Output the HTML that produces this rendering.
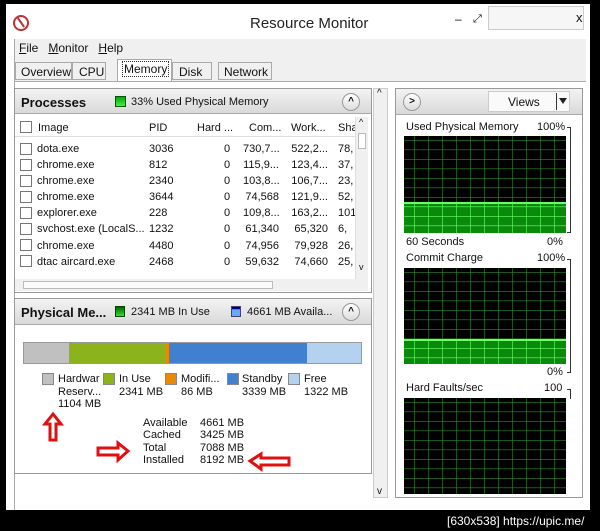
<!DOCTYPE html>
<html><head><style>
*{margin:0;padding:0;box-sizing:border-box}
html,body{width:600px;height:531px;overflow:hidden}
body{background:#000;position:relative;font-family:"Liberation Sans",sans-serif;font-size:11px;color:#111}
.a{position:absolute;white-space:nowrap}
.win{position:absolute;left:6px;top:4px;width:585px;height:506px;background:#fff}
.hdr{background:linear-gradient(#f3f3f3,#d9d9d9);border-bottom:1px solid #aaa}
.cb{position:absolute;width:12px;height:12px;border:1px solid #777;background:#fff}
.circ{position:absolute;width:18px;height:18px;border-radius:50%;border:1px solid #999;background:linear-gradient(#fff,#ddd);font-size:10px;text-align:center;line-height:16px;font-weight:bold}
.sw{position:absolute;width:12px;height:12px;border:1px solid #888}
</style></head><body>
<div class="win"></div>
<!-- title -->
<div class="a" style="left:13px;top:15px;width:16px;height:16px;border-radius:50%;border:2px solid #b33;background:#fff"></div>
<div class="a" style="left:20px;top:17px;width:2px;height:11px;background:#b33;transform:rotate(-35deg)"></div>
<div class="a" style="left:250px;top:15px;font-size:15px;color:#222">Resource Monitor</div>
<div class="a" style="left:455px;top:12px;font-size:12px">–</div>
<div class="a" style="left:473px;top:13px;font-size:11px">⤢</div>
<div class="a" style="left:488px;top:6px;width:96px;height:24px;border:1px solid #ccc;background:#f6f6f6"></div>
<div class="a" style="left:576px;top:10px;font-size:13px">x</div>
<!-- menu -->
<div class="a" style="left:14px;top:39px;width:572px;height:42px;background:#f0f0f0;border-left:1px solid #aaa"></div>
<div class="a" style="left:19px;top:41px;font-size:12px"><u>F</u>ile &nbsp;&nbsp;<u>M</u>onitor &nbsp;&nbsp;<u>H</u>elp</div>
<div class="a" style="left:15px;top:62px;width:57px;height:18px;border:1px solid #aaa;background:#f0f0f0;font-size:12px;padding:2px 5px">Overview</div>
<div class="a" style="left:72px;top:62px;width:34px;height:18px;border:1px solid #aaa;font-size:12px;padding:2px 6px">CPU</div>
<div class="a" style="left:117px;top:59px;width:55px;height:22px;border:1px solid #aaa;border-bottom:none;background:#fff;font-size:12px;padding:2px 4px"><span style="border:1px dotted #333;padding:0 1px">Memory</span></div>
<div class="a" style="left:172px;top:62px;width:40px;height:18px;border:1px solid #aaa;font-size:12px;padding:2px 6px">Disk</div>
<div class="a" style="left:218px;top:62px;width:54px;height:18px;border:1px solid #aaa;font-size:12px;padding:2px 5px">Network</div>
<div class="a" style="left:14px;top:81px;width:572px;height:429px;background:#fff;border-top:1px solid #aaa;border-left:1px solid #aaa"></div>
<!-- left processes panel -->
<div class="a" style="left:14px;top:88px;width:358px;height:205px;border:1px solid #999;background:#fff"></div>
<div class="a hdr" style="left:15px;top:89px;width:356px;height:25px"></div>
<div class="a" style="left:21px;top:95px;font-size:13px;font-weight:bold">Processes</div>
<div class="a" style="left:115px;top:96px;width:11px;height:11px;background:linear-gradient(#0a0,#4e4);border:1px solid #050"></div>
<div class="a" style="left:131px;top:96px">33% Used Physical Memory</div>
<div class="circ" style="left:342px;top:93px">^</div>
<div class="a" style="left:15px;top:117px;width:340px;height:20px;border-bottom:1px solid #ddd"></div>
<div class="cb" style="left:20px;top:121px"></div>
<div class="a" style="left:38px;top:122px">Image</div>
<div class="a" style="left:149px;top:122px">PID</div>
<div class="a" style="left:197px;top:122px">Hard ...</div>
<div class="a" style="left:249px;top:122px">Com...</div>
<div class="a" style="left:291px;top:122px">Work...</div>
<div class="a" style="left:338px;top:122px">Sha</div>
<div class="a" style="left:355px;top:117px;width:13px;height:162px;background:#f0f0f0;border-left:1px solid #ddd"></div>
<div class="a" style="left:358px;top:133px;width:8px;height:16px;border:1px solid #bbb;background:#fff"></div>
<div class="a" style="left:359px;top:117px;font-size:9px">^</div>
<div class="a" style="left:359px;top:262px;font-size:9px">v</div>
<div class="a" style="left:15px;top:279px;width:353px;height:12px;background:#f0f0f0"></div>
<div class="a" style="left:23px;top:281px;width:250px;height:8px;border:1px solid #bbb;background:#fbfbfb"></div>
<div class="a" style="left:20px;top:141px;width:13px">
<div class="cb" style="position:relative;margin:2px 0"></div><div class="cb" style="position:relative;margin:4px 0"></div><div class="cb" style="position:relative;margin:4px 0"></div><div class="cb" style="position:relative;margin:4px 0"></div><div class="cb" style="position:relative;margin:4px 0"></div><div class="cb" style="position:relative;margin:4px 0"></div><div class="cb" style="position:relative;margin:4px 0"></div><div class="cb" style="position:relative;margin:4px 0"></div></div>
<div class="a" style="left:37px;top:141px;line-height:16.1px">dota.exe<br>chrome.exe<br>chrome.exe<br>chrome.exe<br>explorer.exe<br>svchost.exe (LocalS...<br>chrome.exe<br>dtac aircard.exe</div>
<div class="a" style="left:149px;top:141px;line-height:16.1px">3036<br>812<br>2340<br>3644<br>228<br>1232<br>4480<br>2468</div>
<div class="a" style="left:224px;top:141px;line-height:16.1px">0<br>0<br>0<br>0<br>0<br>0<br>0<br>0</div>
<div class="a" style="left:243px;top:141px;line-height:16.1px;width:36px;text-align:right">730,7...<br>115,9...<br>103,8...<br>74,568<br>109,8...<br>61,340<br>74,956<br>59,632</div>
<div class="a" style="left:288px;top:141px;line-height:16.1px;width:40px;text-align:right">522,2...<br>123,4...<br>106,7...<br>121,9...<br>163,2...<br>65,320<br>79,928<br>74,660</div>
<div class="a" style="left:338px;top:141px;line-height:16.1px;width:17px;overflow:hidden">78,<br>37,<br>23,<br>52,<br>101<br>6,<br>26,<br>25,</div>
<!-- outer scrollbar -->
<div class="a" style="left:373px;top:88px;width:15px;height:410px;background:#f0f0f0;border:1px solid #ccc"></div>
<div class="a" style="left:377px;top:88px;font-size:10px">^</div>
<div class="a" style="left:377px;top:486px;font-size:10px">v</div>
<!-- physical memory panel -->
<div class="a" style="left:14px;top:298px;width:358px;height:176px;border:1px solid #999;background:#fff"></div>
<div class="a hdr" style="left:15px;top:299px;width:356px;height:26px"></div>
<div class="a" style="left:21px;top:305px;font-size:13px;font-weight:bold">Physical Me...</div>
<div class="a" style="left:115px;top:306px;width:10px;height:11px;background:linear-gradient(#060,#3d3);border:1px solid #040"></div>
<div class="a" style="left:131px;top:306px">2341 MB In Use</div>
<div class="a" style="left:231px;top:306px;width:10px;height:11px;background:linear-gradient(#008 20%,#6af 30%);border:1px solid #446"></div>
<div class="a" style="left:247px;top:306px">4661 MB Availa...</div>
<div class="circ" style="left:342px;top:303px">^</div>
<div class="a" style="left:23px;top:342px;width:339px;height:22px;border:1px solid #999;display:flex">
<div style="width:45px;background:#c0c0c0"></div><div style="width:97px;background:#8cb21c"></div><div style="width:3px;background:#e98a00"></div><div style="width:138px;background:#3f80d0"></div><div style="flex:1;background:#b4d2f0"></div></div>
<div class="sw" style="left:42px;top:373px;background:#c0c0c0"></div>
<div class="a" style="left:58px;top:373px;line-height:12.5px">Hardwar<br>Reserv...<br>1104 MB</div>
<div class="sw" style="left:103px;top:373px;background:#8cb21c"></div>
<div class="a" style="left:119px;top:373px;line-height:12.5px">In Use<br>2341 MB</div>
<div class="sw" style="left:165px;top:373px;background:#e98a00"></div>
<div class="a" style="left:181px;top:373px;line-height:12.5px">Modifi...<br>86 MB</div>
<div class="sw" style="left:227px;top:373px;background:#3f80d0"></div>
<div class="a" style="left:242px;top:373px;line-height:12.5px">Standby<br>3339 MB</div>
<div class="sw" style="left:288px;top:373px;background:#b4d2f0"></div>
<div class="a" style="left:304px;top:373px;line-height:12.5px">Free<br>1322 MB</div>
<div class="a" style="left:143px;top:417px;line-height:12.4px">Available<br>Cached<br>Total<br>Installed</div>
<div class="a" style="left:200px;top:417px;line-height:12.4px">4661 MB<br>3425 MB<br>7088 MB<br>8192 MB</div>
<!-- red arrows -->
<svg class="a" style="left:0;top:0" width="600" height="531">
<path d="M53 414 L45 424 L50 424 L50 440 L56 440 L56 424 L61 424 Z" fill="#fff" stroke="#e01010" stroke-width="3"/>
<path d="M128 451 L118 443 L118 448 L98 448 L98 455 L118 455 L118 460 Z" fill="#fff" stroke="#e01010" stroke-width="3"/>
<path d="M250 461 L261 454 L261 458 L289 458 L289 465 L261 465 L261 469 Z" fill="#fff" stroke="#e01010" stroke-width="3"/>
</svg>
<!-- right panel -->
<div class="a" style="left:395px;top:88px;width:188px;height:410px;border:1px solid #999;background:#fff"></div>
<div class="a hdr" style="left:396px;top:89px;width:186px;height:26px"></div>
<div class="circ" style="left:403px;top:93px">&gt;</div>
<div class="a" style="left:488px;top:91px;width:82px;height:21px;border:1px solid #ccc;background:#fafafa;font-size:12px;padding:3px 19px">Views</div>
<div class="a" style="left:556px;top:93px;width:1px;height:17px;background:#333"></div>
<div class="a" style="left:559px;top:98px;border:4px solid transparent;border-top:6px solid #222"></div>
<div class="a" style="left:406px;top:121px">Used Physical Memory</div><div class="a" style="left:537px;top:121px">100%</div>
<div class="a" style="left:406px;top:236px">60 Seconds</div><div class="a" style="left:547px;top:236px">0%</div>
<div class="a" style="left:406px;top:252px">Commit Charge</div><div class="a" style="left:537px;top:252px">100%</div>
<div class="a" style="left:547px;top:366px">0%</div>
<div class="a" style="left:406px;top:382px">Hard Faults/sec</div><div class="a" style="left:544px;top:382px">100</div>
<svg class="a" style="left:404px;top:136px" width="162" height="360">
<defs><pattern id="g" x="10" y="4" width="14" height="9.5" patternUnits="userSpaceOnUse"><path d="M0 0V9.5M0 0H14" stroke="#2c8a2c" stroke-width="1.2" fill="none"/></pattern>
<pattern id="g2" x="10" y="4" width="14" height="9.5" patternUnits="userSpaceOnUse"><path d="M0 0V9.5M0 0H14" stroke="#6f6" stroke-width="1.2" fill="none"/></pattern></defs>
<rect x="0" y="0" width="162" height="97" fill="#000"/>
<rect x="0" y="67" width="162" height="30" fill="#0a8a0a"/>
<rect x="0" y="0" width="162" height="97" fill="url(#g)"/>
<rect x="0" y="67" width="162" height="30" fill="url(#g2)"/>
<rect x="0" y="66" width="162" height="2" fill="#6f6"/>
<g transform="translate(0,132)">
<rect x="0" y="0" width="162" height="96" fill="#000"/>
<rect x="0" y="72" width="162" height="24" fill="#0a8a0a"/>
<rect x="0" y="0" width="162" height="96" fill="url(#g)"/>
<rect x="0" y="72" width="162" height="24" fill="url(#g2)"/>
<rect x="0" y="71" width="162" height="2" fill="#6f6"/>
</g>
<g transform="translate(0,262)">
<rect x="0" y="0" width="162" height="96" fill="#000"/>
<rect x="0" y="0" width="162" height="96" fill="url(#g)"/>
</g>
</svg>
<div class="a" style="left:567px;top:127px;width:4px;height:106px;border:1px solid #333;border-left:none"></div>
<div class="a" style="left:567px;top:259px;width:4px;height:114px;border:1px solid #333;border-left:none"></div>
<div class="a" style="left:567px;top:389px;width:4px;height:10px;border-top:1px solid #333;border-right:1px solid #333"></div>
<div class="a" style="left:0;top:510px;width:600px;height:21px;background:#000"></div>
<div class="a" style="left:590px;top:0;width:10px;height:510px;background:#000"></div>
<div class="a" style="left:447px;top:514px;color:#fff;font-size:12px">[630x538] https://upic.me/</div>
</body></html>
